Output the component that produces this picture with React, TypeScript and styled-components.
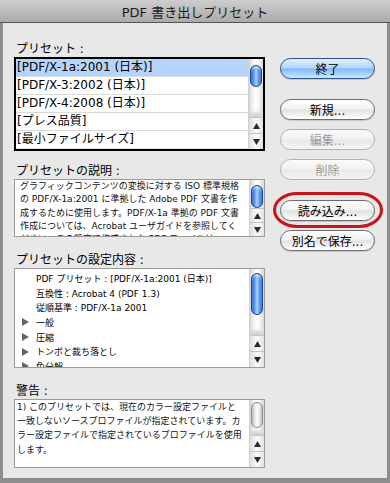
import React from 'react';
import styled, { createGlobalStyle } from 'styled-components';

const GlobalStyle = createGlobalStyle`
  html, body {
    margin: 0;
    padding: 0;
    background: #8d8d8d;
  }
  body {
    font-family: "DejaVu Sans", "Noto Sans CJK JP", sans-serif;
    color: #000;
  }
`;

const Frame = styled.div`
  width: 390px;
  height: 483px;
  box-sizing: border-box;
  background: #8d8d8d;
  padding: 0 3px 5px 3px;
  display: flex;
  flex-direction: column;
`;

const TitleBar = styled.div`
  height: 22px;
  margin: 0 -3px;
  border-bottom: 1px solid #555;
  background: linear-gradient(#cecece, #b8b8b8 60%, #ababab);
  display: flex;
  align-items: center;
  justify-content: center;
  font-size: 13px;
  color: #1a1a1a;
`;

const Body = styled.div`
  flex: 1;
  background: #e8e8e8;
  display: flex;
  gap: 15px;
  padding: 18px 12px 0 11px;
`;

const LeftColumn = styled.div`
  width: 251px;
  display: flex;
  flex-direction: column;
`;

const Section = styled.div<{ $gap: number }>`
  display: flex;
  flex-direction: column;
  margin-top: ${p => p.$gap}px;
`;

const Label = styled.div`
  font-size: 12px;
  line-height: 16px;
  height: 16px;
  padding-left: 2px;
  white-space: nowrap;
`;

const Box = styled.div<{ $height: number; $strong?: boolean }>`
  height: ${p => p.$height}px;
  box-sizing: border-box;
  border: ${p => (p.$strong ? '2px solid #000' : '1px solid #9c9c9c')};
  background: #fff;
  display: flex;
  overflow: hidden;
`;

const BoxContent = styled.div<{ $padTop?: number; $padLeft?: number }>`
  flex: 1;
  min-width: 0;
  overflow: hidden;
  padding: ${p => p.$padTop ?? 0}px 0 0 ${p => p.$padLeft ?? 0}px;
`;

const ListRow = styled.div<{ $selected?: boolean }>`
  height: 17px;
  border-bottom: 1px solid #dadada;
  background: ${p => (p.$selected ? '#b5d4fc' : '#fff')};
  font-size: 12px;
  line-height: 17px;
  padding-left: 1px;
  white-space: nowrap;
`;

const SmallLine = styled.div<{ $lineHeight: number }>`
  font-size: 9px;
  line-height: ${p => p.$lineHeight}px;
  height: ${p => p.$lineHeight}px;
  white-space: nowrap;
  color: #111;
`;

const SettingRow = styled.div`
  display: flex;
  align-items: center;
  height: 14.7px;
  font-size: 9px;
  white-space: nowrap;
`;

const Disclosure = styled.span`
  width: 14px;
  flex: none;
  display: flex;
  align-items: center;
`;

const ScrollTrack = styled.div`
  width: 14px;
  flex: none;
  display: flex;
  flex-direction: column;
  border-left: 1px solid #cfcfcf;
  background: linear-gradient(to right, #d4d4d4, #f0f0f0 25%, #fff 50%, #f0f0f0 75%, #d8d8d8);
`;

const Thumb = styled.div<{ $top: number; $height: number; $active: boolean }>`
  margin: ${p => p.$top}px 1px 0 1px;
  height: ${p => p.$height}px;
  flex: none;
  box-sizing: border-box;
  border-radius: 6px;
  border: 1px solid ${p => (p.$active ? '#1b4596' : '#8a8a8a')};
  background: ${p =>
    p.$active
      ? 'linear-gradient(to right, #2a60c4 0%, #5e9cf0 28%, #a9d1ff 50%, #6ea9f5 70%, #2b66cd 100%)'
      : 'linear-gradient(to right, #b4b4b4 0%, #e6e6e6 28%, #ffffff 50%, #ececec 72%, #bababa 100%)'};
  box-shadow: inset 0 2px 2px rgba(255, 255, 255, 0.45);
`;

const TrackRest = styled.div`
  flex: 1;
  background: radial-gradient(ellipse 55% 7px at 50% 100%, rgba(150, 150, 150, 0.55), rgba(150, 150, 150, 0) 100%);
`;

const ArrowButton = styled.div<{ $height: number }>`
  height: ${p => p.$height}px;
  flex: none;
  box-sizing: border-box;
  border-top: 1px solid #c4c4c4;
  background: linear-gradient(to right, #dedede, #fbfbfb 50%, #e2e2e2);
  display: flex;
  align-items: center;
  justify-content: center;
`;

const RightColumn = styled.div`
  width: 95px;
  display: flex;
  flex-direction: column;
  padding-top: 17px;
`;

type ButtonKind = 'default' | 'normal' | 'disabled';

const AquaButton = styled.div<{ $kind: ButtonKind; $gap?: number }>`
  margin-top: ${p => p.$gap ?? 0}px;
  width: 95px;
  height: 21px;
  box-sizing: border-box;
  border-radius: 11px;
  font-size: 12px;
  display: flex;
  align-items: center;
  justify-content: center;
  white-space: nowrap;
  color: ${p => (p.$kind === 'disabled' ? '#9b9b9b' : '#000')};
  border: 1px solid ${p => (p.$kind === 'default' ? '#2d4f8c' : p.$kind === 'disabled' ? '#b1b1b1' : '#6b6b6b')};
  background: ${p =>
    p.$kind === 'default'
      ? 'linear-gradient(#e0f0ff 0%, #b3d6fb 45%, #86baf2 52%, #a9d3fc 80%, #d2ebff 100%)'
      : p.$kind === 'disabled'
      ? 'linear-gradient(#fafafa 0%, #f1f1f1 48%, #e9e9e9 52%, #f5f5f5 100%)'
      : 'linear-gradient(#ffffff 0%, #f3f3f3 45%, #e2e2e2 52%, #f2f2f2 80%, #ffffff 100%)'};
  box-shadow: ${p => (p.$kind === 'disabled' ? 'none' : '0 1px 1px rgba(0,0,0,0.15)')};
`;

/* red annotation ring drawn over the button */
const Highlighted = styled.div<{ $gap: number }>`
  position: relative;
  margin-top: ${p => p.$gap}px;
  &::after {
    content: '';
    position: absolute;
    top: -8px;
    bottom: -7px;
    left: -7px;
    right: -8px;
    border: 3px solid #c8141c;
    border-radius: 24px / 18px;
    pointer-events: none;
  }
`;

const UpArrow = () => (
  <svg width="7" height="6" viewBox="0 0 7 6">
    <polygon points="3.5,0 7,6 0,6" fill="#2a2a2a" />
  </svg>
);

const DownArrow = () => (
  <svg width="7" height="6" viewBox="0 0 7 6">
    <polygon points="0,0 7,0 3.5,6" fill="#2a2a2a" />
  </svg>
);

const RightTriangle = () => (
  <svg width="7" height="8" viewBox="0 0 7 8">
    <polygon points="0,0 7,4 0,8" fill="#666" />
  </svg>
);

type ScrollProps = { top: number; height: number; arrow: number; active?: boolean };

const Scrollbar: React.FC<ScrollProps> = ({ top, height, arrow, active = true }) => (
  <ScrollTrack>
    <Thumb $top={top} $height={height} $active={active} />
    <TrackRest />
    <ArrowButton $height={arrow}>
      <UpArrow />
    </ArrowButton>
    <ArrowButton $height={arrow}>
      <DownArrow />
    </ArrowButton>
  </ScrollTrack>
);

const presets = [
  '[PDF/X-1a:2001 (日本)]',
  '[PDF/X-3:2002 (日本)]',
  '[PDF/X-4:2008 (日本)]',
  '[プレス品質]',
  '[最小ファイルサイズ]',
];

const description = [
  'グラフィックコンテンツの変換に対する ISO 標準規格',
  'の PDF/X-1a:2001 に準拠した Adobe PDF 文書を作',
  '成するために使用します。PDF/X-1a 準拠の PDF 文書',
  '作成については、Acrobat ユーザガイドを参照してく',
  'ださい。この設定で作成された PDF ファイルは',
];

const settings: { text: string; group?: boolean }[] = [
  { text: 'PDF プリセット : [PDF/X-1a:2001 (日本)]' },
  { text: '互換性 : Acrobat 4 (PDF 1.3)' },
  { text: '従順基準 : PDF/X-1a 2001' },
  { text: '一般', group: true },
  { text: '圧縮', group: true },
  { text: 'トンボと裁ち落とし', group: true },
  { text: '色分解', group: true },
];

const warnings = [
  '1) このプリセットでは、現在のカラー設定ファイルと',
  '一致しないソースプロファイルが指定されています。カ',
  'ラー設定ファイルで指定されているプロファイルを使用',
  'します。',
];

const App: React.FC = () => {
  return (
    <>
      <GlobalStyle />
      <Frame>
        <TitleBar>PDF 書き出しプリセット</TitleBar>
        <Body>
          <LeftColumn>
            <Section $gap={0}>
              <Label>プリセット :</Label>
              <Box $height={94} $strong>
                <BoxContent>
                  {presets.map((p, i) => (
                    <ListRow key={p} $selected={i === 0}>
                      {p}
                    </ListRow>
                  ))}
                </BoxContent>
                <Scrollbar top={6} height={22} arrow={16} />
              </Box>
            </Section>

            <Section $gap={12}>
              <Label>プリセットの説明 :</Label>
              <Box $height={58}>
                <BoxContent $padLeft={5}>
                  {description.map(line => (
                    <SmallLine key={line} $lineHeight={13.3}>
                      {line}
                    </SmallLine>
                  ))}
                </BoxContent>
                <Scrollbar top={5} height={23} arrow={14} />
              </Box>
            </Section>

            <Section $gap={15}>
              <Label>プリセットの設定内容 :</Label>
              <Box $height={100}>
                <BoxContent $padTop={2} $padLeft={7}>
                  {settings.map(s => (
                    <SettingRow key={s.text}>
                      <Disclosure>{s.group && <RightTriangle />}</Disclosure>
                      {s.text}
                    </SettingRow>
                  ))}
                </BoxContent>
                <Scrollbar top={4} height={42} arrow={16} />
              </Box>
            </Section>

            <Section $gap={15}>
              <Label>警告 :</Label>
              <Box $height={69}>
                <BoxContent $padLeft={2}>
                  {warnings.map(line => (
                    <SmallLine key={line} $lineHeight={14.2}>
                      {line}
                    </SmallLine>
                  ))}
                </BoxContent>
                <Scrollbar top={2} height={26} arrow={16} active={false} />
              </Box>
            </Section>
          </LeftColumn>

          <RightColumn>
            <AquaButton $kind="default">終了</AquaButton>
            <AquaButton $kind="normal" $gap={20}>新規...</AquaButton>
            <AquaButton $kind="disabled" $gap={9}>編集...</AquaButton>
            <AquaButton $kind="disabled" $gap={9}>削除</AquaButton>
            <Highlighted $gap={20}>
              <AquaButton $kind="normal">読み込み...</AquaButton>
            </Highlighted>
            <AquaButton $kind="normal" $gap={9}>別名で保存...</AquaButton>
          </RightColumn>
        </Body>
      </Frame>
    </>
  );
};

export default App;
